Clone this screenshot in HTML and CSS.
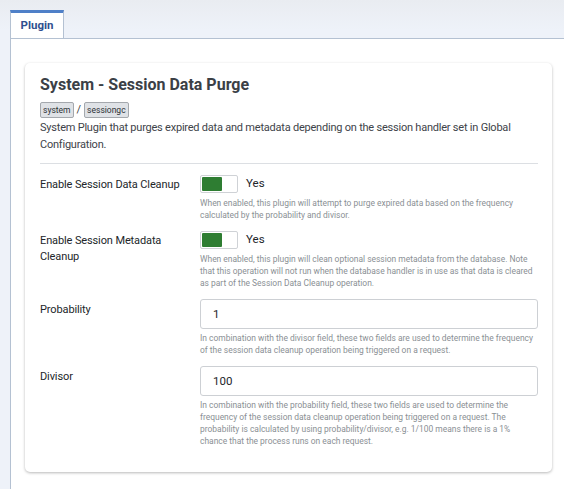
FILE: index.html
```html
<!DOCTYPE html>
<html lang="en">
<head>
<meta charset="utf-8">
<title>System - Session Data Purge</title>
<link rel="stylesheet" href="styles.css">
</head>
<body>
<div class="tabs">
  <div class="tab">Plugin</div>
</div>
<div class="panel">
  <div class="card">
    <h2 class="title">System - Session Data Purge</h2>
    <div class="badges"><span class="badge">system</span><span class="slash">/</span><span class="badge">sessiongc</span></div>
    <p class="intro">System Plugin that purges expired data and metadata depending on the session handler set in Global Configuration.</p>
    <hr class="sep">
    <div class="row">
      <div class="label">Enable Session Data Cleanup</div>
      <div class="control">
        <div class="switch-line"><span class="switch"><span class="on"></span></span><span class="yes">Yes</span></div>
        <div class="help">When enabled, this plugin will attempt to purge expired data based on the frequency calculated by the probability and divisor.</div>
      </div>
    </div>
    <div class="row">
      <div class="label">Enable Session Metadata Cleanup</div>
      <div class="control">
        <div class="switch-line"><span class="switch"><span class="on"></span></span><span class="yes">Yes</span></div>
        <div class="help">When enabled, this plugin will clean optional session metadata from the database. Note that this operation will not run when the database handler is in use as that data is cleared as part of the Session Data Cleanup operation.</div>
      </div>
    </div>
    <div class="row">
      <div class="label label-input">Probability</div>
      <div class="control">
        <div class="input">1</div>
        <div class="help help-input">In combination with the divisor field, these two fields are used to determine the frequency of the session data cleanup operation being triggered on a request.</div>
      </div>
    </div>
    <div class="row">
      <div class="label label-input">Divisor</div>
      <div class="control">
        <div class="input">100</div>
        <div class="help help-input">In combination with the probability field, these two fields are used to determine the frequency of the session data cleanup operation being triggered on a request. The probability is calculated by using probability/divisor, e.g. 1/100 means there is a 1% chance that the process runs on each request.</div>
      </div>
    </div>
  </div>
</div>
</body>
</html>
```
FILE: styles.css
```css
html, body {
  margin: 0;
  padding: 0;
}
body {
  height: 100vh;
  display: flex;
  flex-direction: column;
  overflow: hidden;
  font-family: Roboto, "Liberation Sans", sans-serif;
  background: linear-gradient(#e9ecf1 0px, #eef2f9 30px, #eef2f9 100%);
  color: #22262a;
}
.tabs {
  display: flex;
  padding: 10px 0 0 10px;
}
.tab {
  box-sizing: border-box;
  width: 54px;
  height: 28px;
  background: #fff;
  border-top: 3px solid #4f80c8;
  border-left: 1px solid #b4c1d2;
  border-right: 1px solid #b4c1d2;
  font-size: 11.5px;
  font-weight: 700;
  color: #2e4f8f;
  display: flex;
  align-items: center;
  justify-content: center;
  padding-bottom: 1px;
}
.panel {
  flex: 1;
  min-height: 0;
  overflow: hidden;
  margin-left: 10px;
  background: #fff;
  border-top: 1px solid #b4c1d2;
  border-left: 1px solid #b4c1d2;
  padding: 24px 0 0 14px;
}
.card {
  box-sizing: border-box;
  width: 527px;
  background: #fff;
  border-radius: 5px;
  box-shadow: 0 1px 3px rgba(0, 0, 0, 0.28);
  padding: 11px 14px 25px 15px;
}
.title {
  margin: 0;
  font-size: 16px;
  line-height: 22px;
  font-weight: 700;
  color: #3b4046;
}
.badges {
  display: flex;
  align-items: center;
  margin-top: 5px;
  height: 17px;
}
.badge {
  display: inline-block;
  font-size: 8.5px;
  line-height: 14px;
  padding: 0 2px;
  border: 1px solid #a4a8ad;
  border-radius: 2px;
  background: #dfe2e6;
  color: #2d3136;
}
.slash {
  font-size: 11px;
  color: #444;
  margin: 0 3px;
}
.intro {
  margin: 2px 0 0;
  font-size: 11px;
  letter-spacing: -0.22px;
  line-height: 16.5px;
  color: #3e4349;
}
.sep {
  border: 0;
  border-top: 1px solid #dcdfe3;
  margin: 10px 0 11px;
}
.row {
  display: flex;
  margin-bottom: 10px;
}
.label {
  width: 160px;
  flex: none;
  font-size: 11px;
  letter-spacing: -0.12px;
  line-height: 16px;
  color: #22262a;
  padding-top: 2px;
}
.label-input {
  padding-top: 3px;
}
.control {
  flex: 1;
  min-width: 0;
}
.switch-line {
  display: flex;
  align-items: center;
  height: 18px;
}
.switch {
  box-sizing: border-box;
  width: 38px;
  height: 18px;
  border: 1px solid #cfd2d6;
  border-radius: 2px;
  background: #fff;
  padding: 1px;
  display: flex;
}
.on {
  width: 20px;
  background: #2e7d32;
  border-radius: 1px;
}
.yes {
  margin-left: 8px;
  font-size: 11.5px;
  color: #22262a;
  margin-top: -3px;
}
.help {
  margin-top: 4px;
  font-size: 8.45px;
  line-height: 12px;
  color: #8a8f94;
}
.help-input {
  margin-top: 3px;
}
.input {
  box-sizing: border-box;
  height: 30px;
  border: 1px solid #cdd0d4;
  border-radius: 3px;
  padding: 0 12px;
  display: flex;
  align-items: center;
  font-size: 11.5px;
  color: #22262a;
}
.row:last-child {
  margin-bottom: 0;
}
```
